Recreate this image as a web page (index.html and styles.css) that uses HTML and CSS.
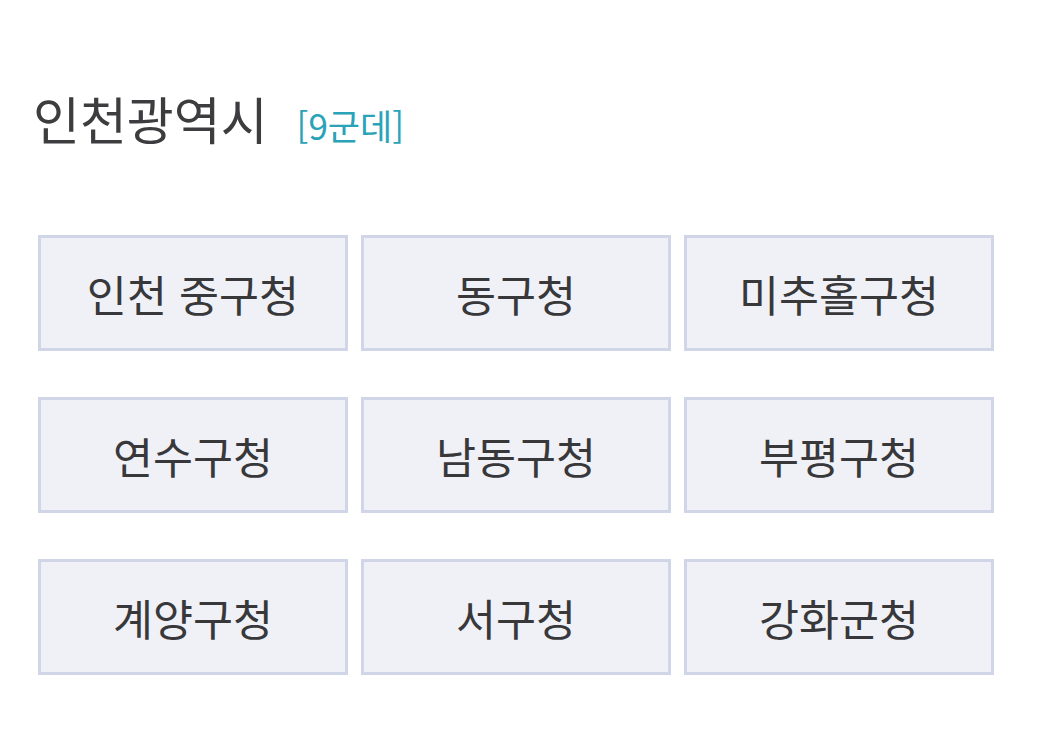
FILE: index.html
```html
<!DOCTYPE html>
<html lang="ko">
<head>
<meta charset="utf-8">
<link rel="stylesheet" href="styles.css">
</head>
<body>
<div class="page">
  <h2 class="title">인천광역시<span class="count">[9군데]</span></h2>
  <div class="grid">
    <div class="cell">인천 중구청</div>
    <div class="cell">동구청</div>
    <div class="cell">미추홀구청</div>
    <div class="cell">연수구청</div>
    <div class="cell">남동구청</div>
    <div class="cell">부평구청</div>
    <div class="cell">계양구청</div>
    <div class="cell">서구청</div>
    <div class="cell">강화군청</div>
  </div>
</div>
</body>
</html>
```

FILE: styles.css
```css
html, body {
  margin: 0;
  padding: 0;
  background: #ffffff;
}
.page {
  padding: 86px 0 0 38px;
  font-family: "Noto Sans CJK KR", "Noto Sans", sans-serif;
}
.title {
  margin: 0 0 0 -5px;
  font-size: 51px;
  font-weight: 400;
  color: #3d3d40;
  line-height: 64px;
  display: flex;
  align-items: baseline;
}
.count {
  font-size: 35px;
  color: #2aa3b9;
  margin-left: 29px;
}
.grid {
  margin-top: 78px;
  display: grid;
  grid-template-columns: repeat(3, 310px);
  grid-auto-rows: 116px;
  column-gap: 13px;
  row-gap: 46px;
}
.cell {
  box-sizing: border-box;
  border: 3px solid #d0d6e8;
  background: #eff1f7;
  display: flex;
  align-items: center;
  justify-content: center;
  font-size: 43.5px;
  color: #38383b;
}
```
